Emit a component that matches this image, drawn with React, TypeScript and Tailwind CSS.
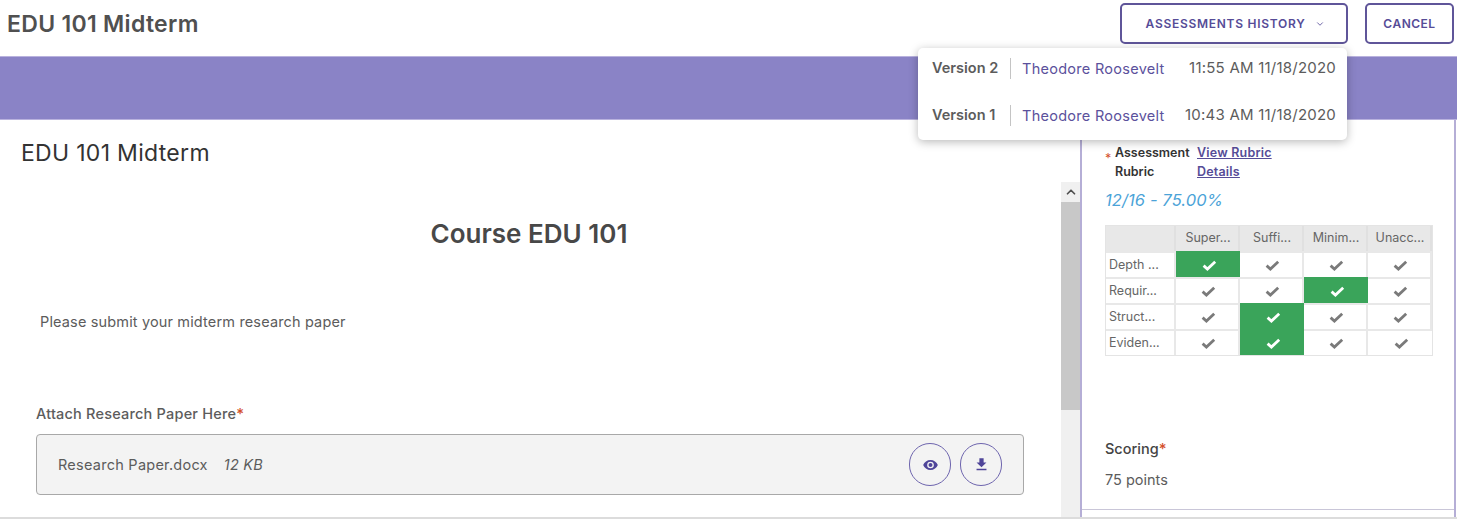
import React from "react";
import { ChevronDown, ChevronUp } from "lucide-react";

const Check = ({ white }: { white?: boolean }) => (
  <svg width="15" height="11" viewBox="0 0 15 11" className={white ? "text-white" : "text-[#7a7a7a]"}>
    <path d="M1.6 5.6 5.4 9 13.2 1.8" fill="none" stroke="currentColor" strokeWidth="2.8" />
  </svg>
);

const Eye = () => (
  <svg width="17" height="16" viewBox="0 0 24 24" fill="#4f4599">
    <path d="M12 4.5C7 4.5 2.73 7.61 1 12c1.73 4.39 6 7.5 11 7.5s9.27-3.11 11-7.5c-1.73-4.39-6-7.5-11-7.5zM12 17a5 5 0 1 1 0-10 5 5 0 0 1 0 10zm0-8a3 3 0 1 0 0 6 3 3 0 0 0 0-6z" />
  </svg>
);

const Download = () => (
  <svg width="17" height="17" viewBox="0 0 24 24" fill="#4f4599">
    <path d="M19 9h-4V3H9v6H5l7 7 7-7zM5 18v2h14v-2H5z" />
  </svg>
);

const cols = ["Super...", "Suffi...", "Minim...", "Unacc..."];
const rows: [string, number][] = [
  ["Depth ...", 0],
  ["Requir...", 2],
  ["Struct...", 1],
  ["Eviden...", 1],
];

export default function App() {
  return (
    <div className="relative h-[520px] w-[1457px] overflow-hidden bg-white font-['Inter',sans-serif] text-[#5c5c5c]">
      <header className="flex h-[56px] items-start justify-between">
        <h1 className="pl-[7px] pt-[10px] text-[23px] font-semibold leading-[28px] tracking-[0.3px] text-[#505050]">EDU 101 Midterm</h1>
        <div className="flex gap-[17px] pr-[3px] pt-[3px]">
          <button className="flex h-[41px] w-[228px] items-center justify-center gap-[10px] rounded-[5px] border-2 border-[#5f5599] pl-[3px] text-[12px] font-semibold tracking-[0.72px] text-[#564c97]">
            ASSESSMENTS HISTORY
            <ChevronDown size={10} strokeWidth={2} />
          </button>
          <button className="h-[41px] w-[89px] rounded-[5px] border-2 border-[#5f5599] text-[12px] font-semibold tracking-[0.5px] text-[#564c97]">
            CANCEL
          </button>
        </div>
      </header>

      <div className="h-[64px] border-y border-[#b9b2de] bg-[#8a83c6]" />

      <main className="flex h-[399px] border-b-2 border-[#dcdcdc]">
        <section className="w-[1061px] shrink-0">
          <h2 className="pl-[21px] pt-[19px] text-[23px] leading-[28px] tracking-[0.3px] text-[#333]">EDU 101 Midterm</h2>
          <h3 className="pr-[3px] pt-[51px] text-center text-[26px] font-semibold leading-[32px] text-[#484848]">Course EDU 101</h3>
          <p className="pl-[40px] pt-[62px] text-[14.5px] leading-[20px] tracking-[0.15px]">Please submit your midterm research paper</p>
          <p className="pl-[36px] pt-[72px] text-[14.5px] font-medium leading-[20px] tracking-[0.2px]">
            Attach Research Paper Here<span className="text-[15px] text-[#d4502b]">*</span>
          </p>
          <div className="ml-[36px] mt-[10px] flex h-[61px] w-[988px] items-center rounded-[4px] border border-[#a8a8a8] bg-[#f3f3f3] pl-[21px] pr-[21px] text-[14.5px] tracking-[0.25px]">
            <span>Research Paper.docx</span>
            <span className="ml-[16px] italic">12 KB</span>
            <div className="ml-auto flex gap-[9px]">
              <span className="flex h-[43px] w-[42px] items-center justify-center rounded-full border border-[#6e65ae]"><Eye /></span>
              <span className="flex h-[43px] w-[42px] items-center justify-center rounded-full border border-[#6e65ae]"><Download /></span>
            </div>
          </div>
        </section>

        <div className="flex w-[19px] shrink-0 flex-col pt-[62px]">
          <div className="flex h-[20px] shrink-0 items-center justify-center bg-[#f0f0f0] text-[#505050]">
            <ChevronUp size={14} strokeWidth={3} />
          </div>
          <div className="h-[208px] shrink-0 bg-[#c8c8c8]" />
          <div className="flex-1 bg-[#f0f0f0]" />
        </div>

        <aside className="flex w-[376px] shrink-0 flex-col border-x-2 border-[#b5aed6] pt-[23px]">
          <div className="flex-1 pl-[23px] pr-[23px]">
            <div className="flex text-[12.5px] leading-[19px]">
              <span className="w-[10px] pt-[6px] text-[#d4502b]">*</span>
              <span className="w-[82px] font-semibold text-[#333]">Assessment Rubric</span>
              <a className="w-[90px] font-semibold tracking-[0.2px] text-[#564c97] underline">View Rubric Details</a>
            </div>
            <p className="mt-[9px] text-[16.5px] italic leading-[20px] tracking-[0.1px] text-[#4ba3d8]">12/16 - 75.00%</p>
            <div className="mt-[15px] grid w-[328px] grid-cols-[70px_64px_64px_64px_64px] border border-[#e4e4e4] text-[12.5px] text-[#666]">
              <div className="h-[25px] border-r-2 border-[#e0e0e0] bg-[#e8e8e8]" />
              {cols.map((c) => (
                <div key={c} className="flex h-[25px] items-center justify-center border-r-2 border-[#e0e0e0] bg-[#e8e8e8] pl-[2px] last:border-r-0">{c}</div>
              ))}
              {rows.map(([label, sel]) => (
                <React.Fragment key={label}>
                  <div className="flex h-[26px] items-center border-r-2 border-t-2 border-[#e8e8e8] pl-[3px]">{label}</div>
                  {cols.map((c, i) => (
                    <div
                      key={c}
                      className={
                        i === sel
                          ? "flex h-[26px] items-center justify-center border-t-2 border-[#3aa45a] bg-[#3aa45a] pl-[3px]"
                          : "flex h-[26px] items-center justify-center border-r-2 border-t-2 border-[#e8e8e8] pl-[3px] last:border-r-0"
                      }
                    >
                      <Check white={i === sel} />
                    </div>
                  ))}
                </React.Fragment>
              ))}
            </div>
            <p className="mt-[83px] text-[14.5px] font-medium leading-[20px] text-[#444]">
              Scoring<span className="text-[15px] text-[#d4502b]">*</span>
            </p>
            <p className="mt-[11px] text-[14.5px] leading-[20px]">75 points</p>
          </div>
          <div className="h-[8px] border-t border-[#c9c6d8]" />
        </aside>
      </main>

      <div className="absolute left-[918px] top-[48px] flex h-[92px] w-[429px] flex-col rounded-[5px] bg-white pl-[14px] pr-[11px] pt-[9px] shadow-[0_2px_10px_rgba(0,0,0,0.28)]">
        {[
          ["Version 2", "11:55 AM 11/18/2020"],
          ["Version 1", "10:43 AM 11/18/2020"],
        ].map(([v, t], i) => (
          <div key={v} className={i === 0 ? "flex h-[23px] items-center" : "mt-[24px] flex h-[23px] items-center"}>
            <span className="w-[78px] -translate-y-[1px] text-[14.5px] font-semibold text-[#5c5c5c]">{v}</span>
            <span className="h-[21px] w-[1px] bg-[#c4c4c4]" />
            <span className="ml-[11px] text-[14.5px] tracking-[0.28px] text-[#5b519c]">Theodore Roosevelt</span>
            <span className="ml-auto text-[15px] tracking-[0.22px]">{t}</span>
          </div>
        ))}
      </div>
    </div>
  );
}
